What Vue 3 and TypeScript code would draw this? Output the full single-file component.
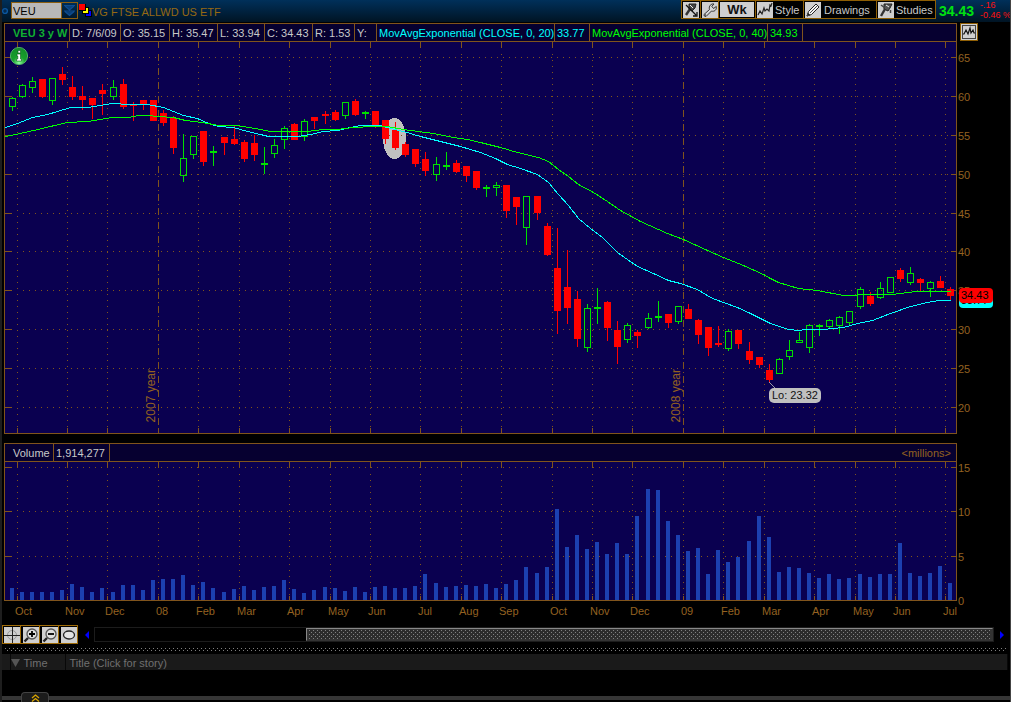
<script setup lang="ts">
import { ref } from 'vue'

type Candle = [x: number, high: number, low: number, top: number, bottom: number, up: 0 | 1]

const symbol = ref('VEU')

const candles: Candle[] = [
  [12, 97, 111, 98, 107, 1], [22, 84, 98, 85, 97, 1], [32, 77, 93, 81, 88, 1], [42, 79, 98, 79, 97, 0],
  [52, 78, 105, 78, 101, 1], [62, 67, 85, 74, 80, 0], [72, 76, 100, 87, 97, 0], [82, 86, 110, 96, 100, 0],
  [92, 98, 119, 98, 105, 0], [102, 84, 115, 90, 94, 0], [113, 80, 100, 87, 97, 1], [123, 79, 109, 84, 107, 0],
  [133, 102, 121, 105, 106, 0], [143, 100, 110, 100, 104, 0], [153, 100, 121, 100, 121, 0], [163, 110, 126, 113, 123, 0],
  [173, 116, 154, 118, 148, 0], [183, 134, 182, 158, 176, 1], [193, 136, 159, 136, 155, 1], [203, 131, 166, 131, 162, 0],
  [213, 146, 166, 151, 153, 1], [224, 137, 155, 137, 143, 0], [234, 126, 145, 139, 144, 0], [244, 140, 162, 142, 159, 0],
  [254, 135, 161, 143, 155, 0], [264, 147, 174, 163, 165, 1], [274, 139, 158, 145, 154, 1], [284, 126, 149, 128, 140, 1],
  [294, 123, 140, 124, 140, 0], [304, 119, 141, 121, 137, 1], [314, 117, 129, 117, 121, 0], [325, 111, 124, 114, 116, 0],
  [335, 110, 121, 112, 120, 0], [345, 102, 119, 102, 116, 1], [355, 99, 116, 101, 115, 0], [365, 111, 119, 112, 114, 1],
  [375, 111, 128, 111, 125, 0], [385, 120, 144, 120, 139, 0], [395, 122, 150, 130, 148, 0], [405, 142, 157, 144, 155, 0],
  [415, 149, 167, 149, 164, 0], [425, 152, 176, 159, 171, 0], [436, 157, 181, 164, 175, 1], [446, 152, 170, 165, 167, 1],
  [456, 160, 173, 163, 172, 0], [466, 166, 182, 166, 176, 0], [476, 171, 190, 171, 188, 0], [486, 185, 197, 187, 189, 1],
  [496, 182, 196, 185, 188, 1], [506, 185, 218, 185, 211, 0], [516, 197, 225, 197, 207, 0], [526, 196, 245, 196, 228, 1],
  [537, 196, 220, 196, 213, 0], [547, 223, 256, 226, 255, 0], [557, 228, 334, 268, 311, 0], [567, 250, 324, 287, 308, 0],
  [577, 291, 347, 299, 339, 0], [587, 304, 352, 308, 348, 1], [597, 288, 324, 307, 309, 1], [607, 301, 341, 302, 328, 0],
  [617, 321, 364, 330, 347, 0], [627, 323, 343, 325, 340, 1], [637, 330, 348, 332, 336, 0], [648, 313, 329, 318, 328, 1],
  [658, 301, 322, 316, 318, 1], [668, 314, 328, 314, 323, 0], [678, 306, 324, 306, 322, 1], [688, 304, 319, 309, 319, 0],
  [698, 319, 344, 320, 335, 0], [708, 327, 356, 327, 348, 0], [718, 326, 347, 343, 345, 0], [728, 329, 351, 331, 349, 1],
  [738, 330, 349, 330, 344, 0], [749, 342, 364, 351, 360, 0], [759, 357, 368, 357, 365, 0], [769, 364, 382, 370, 380, 0],
  [779, 358, 374, 359, 374, 1], [789, 340, 360, 350, 357, 1], [799, 332, 343, 340, 343, 1], [809, 324, 353, 325, 348, 1],
  [819, 324, 336, 325, 327, 1], [829, 319, 328, 320, 327, 1], [839, 316, 334, 317, 326, 1], [849, 311, 326, 311, 323, 1],
  [860, 287, 309, 289, 307, 1], [870, 292, 306, 296, 304, 0], [880, 282, 299, 288, 298, 1], [890, 277, 293, 277, 293, 1],
  [900, 268, 282, 270, 279, 0], [910, 267, 285, 273, 283, 1], [920, 278, 291, 279, 283, 0], [930, 281, 297, 282, 289, 1],
  [940, 276, 288, 281, 288, 0], [950, 287, 300, 289, 296, 0],
]

const volumeTops: number[] = [
  588, 592, 592, 592, 592, 590, 584, 587, 592, 588, 592, 585, 585, 590, 580, 579, 579, 575, 585, 582, 588, 592, 589, 586,
  590, 587, 586, 580, 589, 593, 590, 587, 588, 591, 587, 592, 587, 586, 588, 588, 586, 574, 583, 587, 586, 585, 586, 584,
  588, 584, 580, 567, 573, 567, 509, 547, 535, 549, 542, 554, 543, 554, 516, 489, 490, 521, 535, 551, 548, 574, 550, 562,
  557, 541, 516, 537, 572, 567, 568, 573, 578, 574, 579, 578, 574, 577, 574, 574, 543, 573, 576, 573, 566, 583,
]

const ema20 =
  '5,127 17,123 32,117 47,114 57,111 70,107 87,107 100,105 112,103 118,103 123,104 147,104 163,107 183,115 197,118 208,123 218,126 233,127 247,131 260,134 268,136 297,136 310,134 323,131 337,130 350,127 360,125 380,125 390,128 403,131 420,136 440,141 460,146 480,152 495,158 507,164 520,168 537,174 548,182 558,194 568,205 578,218 590,228 602,237 617,252 637,266 653,273 668,280 680,283 697,289 710,297 723,302 737,307 750,313 770,323 788,329 798,330 805,329 822,329 843,327 857,323 872,320 890,313 910,306 927,302 938,300 950,300'
const ema40 =
  '5,136 15,134 33,130 50,126 67,122 87,121 112,117 128,117 138,115 147,115 157,116 173,117 185,120 202,122 218,125 237,125 260,129 270,131 307,131 322,129 337,129 353,127 373,126 387,126 403,129 433,133 453,137 467,139 480,142 500,147 517,152 538,157 548,161 558,169 568,176 578,184 593,192 607,201 620,210 640,221 667,233 683,239 707,250 723,257 743,265 763,274 770,278 778,282 798,288 817,290 843,295 853,295 860,294 877,294 892,294 907,292 917,291 950,291'

const months = [
  { x: 17, label: 'Oct' }, { x: 67, label: 'Nov' }, { x: 107, label: 'Dec' }, { x: 158, label: '08' },
  { x: 198, label: 'Feb' }, { x: 239, label: 'Mar' }, { x: 289, label: 'Apr' }, { x: 330, label: 'May' },
  { x: 370, label: 'Jun' }, { x: 420, label: 'Jul' }, { x: 461, label: 'Aug' }, { x: 501, label: 'Sep' },
  { x: 552, label: 'Oct' }, { x: 592, label: 'Nov' }, { x: 632, label: 'Dec' }, { x: 683, label: '09' },
  { x: 723, label: 'Feb' }, { x: 764, label: 'Mar' }, { x: 814, label: 'Apr' }, { x: 855, label: 'May' },
  { x: 895, label: 'Jun' }, { x: 945, label: 'Jul' },
]
const years = [{ x: 158, label: '2007 year' }, { x: 683, label: '2008 year' }]
const isYear = (x: number) => years.some((y) => y.x === x)

const prices = [
  { y: 57, label: '65' }, { y: 96, label: '60' }, { y: 135, label: '55' }, { y: 174, label: '50' },
  { y: 213, label: '45' }, { y: 251, label: '40' }, { y: 290, label: '35' }, { y: 329, label: '30' },
  { y: 368, label: '25' }, { y: 407, label: '20' },
]
const volumes = [
  { y: 467, label: '15' }, { y: 511, label: '10' }, { y: 556, label: '5' }, { y: 600, label: '0' },
]

const legend = [
  { text: 'VEU 3 y W', kind: 'name' }, { text: 'D: 7/6/09', kind: '' }, { text: 'O: 35.15', kind: '' },
  { text: 'H: 35.47', kind: '' }, { text: 'L: 33.94', kind: '' }, { text: 'C: 34.43', kind: '' },
  { text: 'R: 1.53', kind: '' }, { text: 'Y:', kind: '' },
  { text: 'MovAvgExponential (CLOSE, 0, 20)', kind: 'cyan' }, { text: '33.77', kind: 'cyan' },
  { text: 'MovAvgExponential (CLOSE, 0, 40)', kind: 'lime' }, { text: '34.93', kind: 'lime' },
]

// Chart space to percentages of the plot areas
const px = (x: number) => `${((x - 5) / 951) * 100}%`
const py = (y: number) => `${((y - 42) / 391) * 100}%`
const vy = (y: number) => `${((y - 462) / 138) * 100}%`
</script>

<template>
  <main class="window">
    <header class="topbar">
      <svg class="dot" viewBox="0 0 8 8"><circle cx="4" cy="4" r="2.4" fill="#032a50" stroke="#0c57a0" stroke-width="1.4" /></svg>
      <div class="symbol">
        <input v-model="symbol" class="symbol-input" aria-label="Symbol" />
        <button class="symbol-drop" aria-label="Choose symbol">
          <svg viewBox="0 0 15 15">
            <path d="M2 2.500H13M3 3L7.500 7L12 3M2 8H13M3 8.500L7.500 12.500L12 8.500" fill="#0a3f78" stroke="#0d4d92" stroke-width="1.2" />
          </svg>
        </button>
      </div>
      <svg class="link-logo" viewBox="0 0 13 13" shape-rendering="crispEdges">
        <rect x="6" y="6" width="7" height="7" fill="#000" /><rect x="7" y="7" width="5" height="5" fill="#00f" />
        <rect x="3" y="3" width="7" height="7" fill="#000" /><rect x="4" y="4" width="5" height="5" fill="#ff0" />
        <rect width="7" height="7" fill="#000" /><rect width="6" height="6" fill="#f00" />
      </svg>
      <h1 class="company">VG FTSE ALLWD US ETF</h1>

      <nav class="tools">
        <button class="tool square" aria-label="Clear studies">
          <svg class="icon" viewBox="0 0 16 16">
            <rect class="face" width="16" height="16" />
            <path d="M6 2L13 2L12 6L9 9L6 7Z" fill="#444" stroke="#222" />
            <path d="M7 7L3 13" stroke="#333" stroke-width="2.400" />
            <path d="M7 3L10 6" stroke="#eee" />
            <path d="M3 3L13 13M10 14H14V10" stroke="#111" stroke-width="1.3" fill="none" />
          </svg>
        </button>
        <button class="tool square" aria-label="Settings">
          <svg class="icon" viewBox="0 0 16 16">
            <rect class="face" width="16" height="16" />
            <path d="M2 12.500L7.500 7.500C6.500 4 9 1.500 12 2L9.800 4.300L11.500 6.500L14.300 4.500C15 8 12 10 9.500 9L4 14.500Q1.500 14.500 2 12.500Z" fill="#d8d8d8" stroke="#333" />
            <circle cx="3.500" cy="13" r=".7" fill="#333" />
          </svg>
        </button>
        <button class="tool interval"><span>Wk</span></button>
        <button class="tool style">
          <svg class="icon" viewBox="0 0 16 16">
            <rect class="face" width="16" height="16" />
            <path d="M1 13L3 9L5 12L7 6L8 9L10 7L12 9L13 3L14 4L15 1" stroke="#222" stroke-width="1.2" fill="none" />
          </svg>
          <span>Style</span>
        </button>
        <button class="tool drawings">
          <svg class="icon" viewBox="0 0 16 16">
            <rect class="face" width="16" height="16" />
            <path d="M2 14L3.500 9.500L11 2L14 5L6.500 12.500Z" fill="#f4f4f4" stroke="#222" />
            <path d="M2 14L3 11L5 13ZM5 11L12 4" fill="#222" stroke="#444" stroke-width="1" />
          </svg>
          <span>Drawings</span>
        </button>
        <button class="tool studies">
          <svg class="icon" viewBox="0 0 16 16">
            <rect class="face" width="16" height="16" />
            <path d="M6 2L14 2L12 6L10 9L6 7Z" fill="#555" stroke="#222" />
            <path d="M3 3L7 6" stroke="#444" stroke-width="1.500" />
            <path d="M7 7L3 14" stroke="#333" stroke-width="2.400" />
            <path d="M8 3L11 5" stroke="#eee" />
            <path d="M12.500 8V11" stroke="#444" stroke-width="1.500" />
          </svg>
          <span>Studies</span>
        </button>
      </nav>
      <strong class="last">34.43</strong>
      <div class="change"><span>-.16</span><span>-0.46 %</span></div>
    </header>

    <section class="chart-row price-row">
      <div class="panel">
        <div class="legend">
          <span v-for="(item, i) in legend" :key="i" class="cell" :class="item.kind">{{ item.text }}</span>
        </div>
        <div class="plot">
          <svg class="canvas" viewBox="5 42 951 391" preserveAspectRatio="none" shape-rendering="crispEdges">
            <ellipse cx="394.500" cy="138.500" rx="11.500" ry="20.500" fill="#c0c0c0" />
            <g transform="translate(0.5 0.5)" class="grid">
              <line v-for="p in prices" :key="p.y" class="dots" x1="22" :y1="p.y" x2="950" :y2="p.y" />
              <line v-for="m in months" :key="m.x" :class="isYear(m.x) ? 'dashdot' : 'dots'" :x1="m.x" y1="53" :x2="m.x" y2="427" />
              <path v-for="m in months" :key="'t' + m.x" :d="`M${m.x} 41V47M${m.x} 427V433`" />
              <path v-for="p in prices" :key="'s' + p.y" :d="`M4 ${p.y}H11M950 ${p.y}H956`" />
            </g>
            <g v-for="c in candles" :key="c[0]" :class="c[5] ? 'up' : 'down'">
              <template v-if="c[5] && c[4] - c[3] > 2">
                <rect class="wick" :x="c[0]" :y="c[1]" width="1" :height="c[3] - c[1]" />
                <rect class="wick" :x="c[0]" :y="c[4]" width="1" :height="c[2] - c[4]" />
                <rect class="hollow" :x="c[0] - 2.5" :y="c[3] + 0.5" width="6" :height="c[4] - c[3] - 1" />
              </template>
              <template v-else>
                <rect class="wick" :x="c[0]" :y="c[1]" width="1" :height="c[2] - c[1]" />
                <rect class="wick" :x="c[0] - 3" :y="c[3]" width="7" :height="c[4] - c[3]" />
              </template>
            </g>
            <g transform="translate(0.5 0.5)" fill="none">
              <polyline :points="ema20" stroke="#00ffff" />
              <polyline :points="ema40" stroke="#00ff00" />
              <path d="M769 382L776 389" stroke="#9a9aa8" />
            </g>
          </svg>
          <button class="info" aria-label="Information">
            <svg viewBox="0 0 18 18">
              <defs>
                <radialGradient id="orb" cx=".5" cy=".9" r=".9">
                  <stop offset="0" stop-color="#8dff9a" /><stop offset=".4" stop-color="#18a02c" /><stop offset="1" stop-color="#128a28" />
                </radialGradient>
              </defs>
              <circle cx="9" cy="9" r="8.600" fill="url(#orb)" stroke="#5fc870" stroke-width=".8" />
              <path d="M8 3.500H10.500V6H8ZM7 7H10.500V12H11.500V14H6.500V12H7.800V9H7Z" fill="#fff" stroke="#0a5a18" stroke-width=".6" />
            </svg>
          </button>
          <span v-for="y in years" :key="y.x" class="year" :style="{ left: px(y.x) }">{{ y.label }}</span>
          <span class="low" :style="{ left: px(769), top: py(388) }">Lo: 23.32</span>
        </div>
      </div>
      <aside class="scale">
        <button class="mini" aria-label="Chart settings">
          <svg class="icon" viewBox="0 0 16 16">
            <rect class="face" width="16" height="16" />
            <rect x="1.500" y="1.500" width="13" height="13" fill="none" stroke="#444" />
            <path d="M2 10H3L5 6L7 10L9 4L10 9L12 6L13 9H14" stroke="#111" stroke-width="1.2" fill="none" />
          </svg>
        </button>
        <div class="labels">
          <span v-for="p in prices" :key="p.y" class="mark" :style="{ top: py(p.y + 1) }">{{ p.label }}</span>
          <span class="tag tag-cyan" :style="{ top: py(301) }">33.77</span>
          <span class="tag tag-red" :style="{ top: py(296) }">34.43</span>
        </div>
      </aside>
    </section>

    <section class="chart-row volume-row">
      <div class="panel">
        <div class="legend vol-legend">
          <span class="cell">Volume</span><span class="cell">1,914,277</span><span class="unit">&lt;millions&gt;</span>
        </div>
        <div class="plot">
          <svg class="canvas" viewBox="5 462 951 138" preserveAspectRatio="none" shape-rendering="crispEdges">
            <g transform="translate(0.5 0.5)" class="grid">
              <line v-for="v in volumes.slice(0, 3)" :key="v.y" class="dots" x1="22" :y1="v.y" x2="950" :y2="v.y" />
              <line v-for="m in months" :key="m.x" class="dots" :x1="m.x" y1="473" :x2="m.x" y2="594" />
              <path v-for="m in months" :key="'t' + m.x" :d="`M${m.x} 461V467M${m.x} 595V600`" />
              <path v-for="v in volumes.slice(0, 3)" :key="'s' + v.y" :d="`M4 ${v.y}H11M950 ${v.y}H956`" />
            </g>
            <rect v-for="(c, i) in candles" :key="c[0]" :x="c[0] - 2" :y="volumeTops[i]" width="4" :height="600 - volumeTops[i]" fill="#1c40b0" />
          </svg>
        </div>
      </div>
      <aside class="scale">
        <div class="labels">
          <span v-for="v in volumes" :key="v.y" class="mark" :style="{ top: vy(v.y + 1) }">{{ v.label }}</span>
        </div>
      </aside>
    </section>

    <div class="chart-row time-axis">
      <div class="months">
        <span v-for="m in months" :key="m.x" class="month" :style="{ left: px(m.x) }">{{ m.label }}</span>
      </div>
    </div>

    <div class="scroll-row">
      <div class="zoom-tools">
        <button aria-label="Crosshair">
          <svg class="icon" viewBox="0 0 16 16"><rect class="face" width="16" height="16" /><circle cx="8" cy="8" r="4.500" fill="none" stroke="#999" /><path d="M0 8.500H16M8.500 0V16" stroke="#222" /></svg>
        </button>
        <button aria-label="Zoom in">
          <svg class="icon" viewBox="0 0 16 16"><rect class="face" width="16" height="16" /><circle cx="9" cy="7" r="5" fill="#ddd" stroke="#555" stroke-width="1.3" /><path d="M6 7H12M9 4V10" stroke="#000" stroke-width="1.800" /><path d="M5 11L1.500 14.500" stroke="#222" stroke-width="2.400" /></svg>
        </button>
        <button aria-label="Zoom out">
          <svg class="icon" viewBox="0 0 16 16"><rect class="face" width="16" height="16" /><circle cx="9" cy="7" r="5" fill="#ddd" stroke="#555" stroke-width="1.3" /><path d="M6 7H12" stroke="#000" stroke-width="1.800" /><path d="M5 11L1.500 14.500" stroke="#222" stroke-width="2.400" /></svg>
        </button>
        <button aria-label="Draw ellipse">
          <svg class="icon" viewBox="0 0 16 16"><rect class="face" width="16" height="16" /><ellipse cx="8" cy="8" rx="5.500" ry="4" fill="#e4e4e4" stroke="#222" stroke-width="1.300" /></svg>
        </button>
      </div>
      <button class="arrow" aria-label="Scroll left"><svg viewBox="0 0 5 8"><path d="M5 0V8L1 4Z" fill="#00f" /></svg></button>
      <div class="track"><div class="thumb"><i></i></div></div>
      <button class="arrow" aria-label="Scroll right"><svg viewBox="0 0 5 8"><path d="M0 0V8L4 4Z" fill="#00f" /></svg></button>
    </div>

    <div class="splitter"></div>

    <table class="news">
      <thead>
        <tr>
          <th class="gutter"></th>
          <th class="time"><svg viewBox="0 0 9 8"><path d="M0 0H9L4.500 8Z" fill="#555" /></svg>Time</th>
          <th class="title">Title (Click for story)</th>
        </tr>
      </thead>
    </table>

    <footer class="bottom">
      <button class="drawer" aria-label="Expand">
        <svg viewBox="0 0 9 8"><path d="M1 4L4.500 1L8 4M1 7.500L4.500 4.500L8 7.500" fill="none" stroke="#d8a400" stroke-width="1.300" /></svg>
      </button>
    </footer>
  </main>
</template>

<style>
body {
  margin: 0;
  background: #000;
}
</style>

<style scoped>
* {
  box-sizing: border-box;
}
.window {
  display: flex;
  flex-direction: column;
  min-height: 100vh;
  background: #000;
  border-left: 2px solid #1e1e1e;
  border-right: 1px solid #444;
  font: 11px/16px 'Liberation Sans', Arial, sans-serif;
  color: #c8c8c8;
  overflow: hidden;
}
button,
input {
  margin: 0;
  padding: 0;
  border: 0;
  border-radius: 0;
  background: none;
  color: inherit;
  font: inherit;
}
svg {
  display: block;
  flex: none;
}
.icon {
  width: 16px;
  height: 16px;
}
.face {
  fill: #cfcfcf;
}

.topbar {
  display: flex;
  height: 23px;
  flex: none;
  align-items: flex-start;
  background: linear-gradient(#00305a, #001424);
  border-bottom: 1px solid #000;
}
.dot {
  width: 8px;
  height: 8px;
  margin: 7px 1px 0 -1px;
}
.symbol {
  display: flex;
  margin: 2px 1px 0;
  border: 1px solid #8b5e10;
}
.symbol-input {
  width: 49px;
  height: 15px;
  padding-left: 1px;
  background: #b8b8b8;
  color: #000;
  outline: 0;
}
.symbol-drop {
  width: 16px;
  height: 15px;
  border-left: 1px solid #8b5e10;
}
.symbol-drop svg {
  width: 15px;
  height: 15px;
}
.link-logo {
  width: 13px;
  height: 13px;
  margin-top: 4px;
}
.company {
  margin: 4px 0 0;
  font-size: 11px;
  line-height: 16px;
  font-weight: 400;
  color: #966912;
  white-space: nowrap;
}
.tools {
  display: flex;
  margin-left: auto;
  border: 1px solid #8f5f05;
}
.tool {
  display: flex;
  align-items: center;
  gap: 2px;
  height: 17px;
  padding-left: 1px;
  background: #000;
  white-space: nowrap;
}
.tool + .tool {
  border-left: 1px solid #8f5f05;
}
.tool.square {
  width: 18px;
}
.tool.interval {
  width: 37px;
  padding: 1px;
}
.tool.style {
  width: 48px;
}
.tool.drawings {
  width: 73px;
  gap: 3px;
}
.tool.studies {
  width: 59px;
}
.interval span {
  flex: 1;
  background: #cfcfcf;
  color: #111;
  font-size: 13px;
  font-weight: 700;
  line-height: 15px;
}
.last {
  width: 37px;
  margin-left: 3px;
  color: #00e010;
  font-size: 14px;
  line-height: 22px;
}
.change {
  display: flex;
  flex-direction: column;
  width: 34px;
  padding-left: 4px;
  color: #ff1010;
  font-size: 9px;
  line-height: 10px;
  white-space: nowrap;
}

.chart-row {
  display: grid;
  grid-template-columns: minmax(0, 1fr) 53px;
  padding-left: 2px;
}
.price-row {
  flex: 411 0 411px;
  margin-bottom: 9px;
}
.volume-row {
  flex: 158 0 158px;
}
.panel {
  display: flex;
  flex-direction: column;
  border: 1px solid #80541c;
}
.legend {
  display: grid;
  grid-template-columns: 65px 51px 49px 48px 47px 48px 42px 22px 178px 35px 178px 35px;
  flex: none;
  height: 18px;
  border-bottom: 1px solid #80541c;
  background: #060030;
  line-height: 18px;
  white-space: nowrap;
  overflow: hidden;
}
.cell {
  padding-left: 2px;
  border-right: 1px solid #80541c;
}
.cell:first-child {
  padding-left: 8px;
}
.name {
  color: #10b030;
  font-weight: 700;
}
.cyan {
  color: #00ffff;
}
.lime {
  color: #00ff00;
}
.vol-legend {
  grid-template-columns: 49px 56px 1fr;
}
.unit {
  padding-right: 5px;
  color: #946220;
  text-align: right;
}
.plot {
  position: relative;
  flex: 1;
  min-height: 0;
  background: #0a0050;
}
.canvas {
  position: absolute;
  inset: 0;
  width: 100%;
  height: 100%;
}
.grid {
  fill: none;
  stroke: #80541c;
}
.dots {
  stroke-dasharray: 1 5;
}
.dashdot {
  stroke-dasharray: 7 3 1 3;
}
.up .wick {
  fill: #00e000;
}
.up .hollow {
  fill: none;
  stroke: #00e000;
}
.down .wick {
  fill: #ff0000;
}
.info {
  position: absolute;
  left: 5px;
  top: 5px;
  width: 18px;
  height: 18px;
}
.year {
  position: absolute;
  bottom: 11px;
  margin-left: -14px;
  color: #946220;
  font-size: 12px;
  line-height: 14px;
  white-space: nowrap;
  writing-mode: vertical-rl;
  transform: rotate(180deg);
}
.low {
  position: absolute;
  padding: 0 3px;
  border-radius: 5px;
  background: #c0c0c0;
  color: #111;
  line-height: 15px;
  white-space: nowrap;
}
.scale {
  display: flex;
  flex-direction: column;
  color: #946220;
}
.mini {
  align-self: flex-start;
  margin: 0 0 0 3px;
  border: 1px solid #8f5f05;
}
.labels {
  position: relative;
  flex: 1;
  margin: 1px 0;
}
.volume-row .labels {
  margin-top: 19px;
}
.mark,
.tag {
  position: absolute;
  left: 1px;
  margin-top: -8px;
}
.tag {
  left: 2px;
  width: 34px;
  height: 15px;
  padding-left: 2px;
  border-radius: 4px;
  color: #000;
  line-height: 15px;
}
.tag-cyan {
  background: #00ffff;
}
.tag-red {
  background: #ff0000;
}

.time-axis {
  height: 24px;
  flex: none;
}
.months {
  position: relative;
  margin: 0 1px;
}
.month {
  position: absolute;
  top: 2px;
  margin-left: -2px;
  color: #946220;
}

.scroll-row {
  display: flex;
  flex: none;
  align-items: center;
  height: 19px;
}
.zoom-tools {
  display: flex;
  border: 1px solid #a06c08;
}
.zoom-tools button {
  height: 17px;
  padding-left: 1px;
}
.zoom-tools button + button {
  padding-left: 2px;
  border-left: 1px solid #a06c08;
}
.arrow {
  display: flex;
  align-items: center;
  justify-content: center;
  width: 16px;
  height: 15px;
}
.arrow svg {
  width: 5px;
  height: 8px;
}
.track {
  display: grid;
  grid-template-columns: 211fr 687fr;
  flex: 1;
  height: 15px;
  border: 1px solid #1c1c1c;
}
.thumb {
  grid-column: 2;
  height: 13px;
  padding: 1px 2px;
  border: 1px solid #333;
  border-top-color: #888;
  border-left-color: #888;
  background: #333;
}
.thumb i,
.splitter {
  display: block;
  background-image: conic-gradient(at 1px 1px, transparent 75%, #808080 0), conic-gradient(at 1px 1px, transparent 75%, #808080 0);
  background-position: 0 0, 2px 2px;
  background-size: 4px 4px;
}
.thumb i {
  height: 100%;
  background-color: #2c2c2c;
}
.splitter {
  flex: none;
  height: 3px;
  margin: 4px 4px 3px 3px;
}
.news {
  width: calc(100% - 2px);
  border-collapse: collapse;
  table-layout: fixed;
  background: #1a1a1a;
  color: #707070;
}
.news th {
  height: 16px;
  padding: 2px 0 0;
  border-right: 1px solid #080808;
  font-weight: 400;
  line-height: 14px;
  text-align: left;
}
.news .gutter {
  width: 8px;
}
.news .time {
  width: 55px;
}
.news .time svg {
  display: inline-block;
  width: 9px;
  height: 8px;
  margin-right: 4px;
}
.news .title {
  padding-left: 4px;
}
.bottom {
  flex: none;
  height: 10px;
  margin-top: 22px;
  padding-left: 19px;
  background: linear-gradient(#000 4px, #363636 4px, #363636 8px, #000 8px);
}
.drawer {
  display: flex;
  align-items: center;
  justify-content: center;
  width: 28px;
  height: 10px;
  border: 1px solid #444;
  border-bottom: 0;
  border-radius: 4px 4px 0 0;
  background: #1c1c1c;
}
.drawer svg {
  width: 9px;
  height: 8px;
}
</style>
